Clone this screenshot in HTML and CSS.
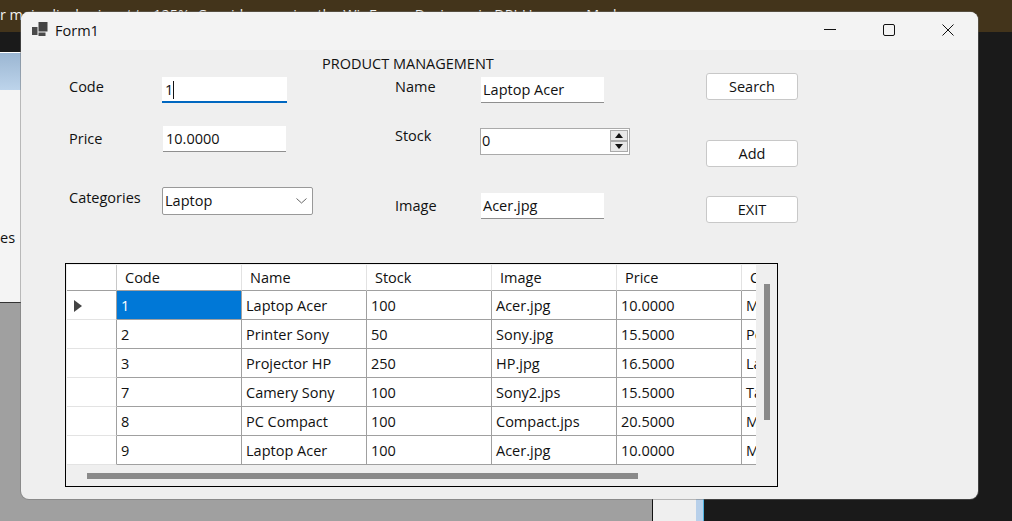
FILE: index.html
```html
<!DOCTYPE html>
<html lang="en">
<head>
<meta charset="utf-8">
<title>Form1</title>
<link rel="stylesheet" href="styles.css">
</head>
<body>
<div class="desktop">
  <div class="banner">r main display is set to 125%. Consider running the WinForms Designer in DPI-Unaware Mode</div>
  <div class="back-doc">
    <div class="back-gradient"></div>
    <div class="back-text">es</div>
  </div>
  <div class="back-gray"></div>
  <div class="back-strip"></div>

  <main class="window">
    <header class="titlebar">
      <svg class="app-icon" width="16" height="14" viewBox="0 0 16 14"><rect x="0" y="5" width="5.5" height="8" fill="#4a4a4a"/><rect x="6.5" y="0" width="9" height="9.5" fill="#444"/><rect x="6.5" y="10.5" width="7" height="3.5" fill="#4a4a4a"/></svg>
      <span class="title-text">Form1</span>
      <div class="caption-buttons">
        <svg width="12" height="12" viewBox="0 0 12 12"><path d="M0 5.5H12" stroke="#111" stroke-width="1"/></svg>
        <svg width="12" height="12" viewBox="0 0 12 12"><rect x=".5" y=".5" width="11" height="11" rx="1.5" fill="none" stroke="#111"/></svg>
        <svg width="12" height="12" viewBox="0 0 12 12"><path d="M.5 .5L11.5 11.5M11.5 .5L.5 11.5" stroke="#111" stroke-width="1"/></svg>
      </div>
    </header>

    <section class="form-panel">
      <h1 class="form-title">PRODUCT MANAGEMENT</h1>
      <div class="form-columns">
        <div class="col col-left">
          <div class="row row-code"><label class="lbl">Code</label><div class="field field-focus">1<span class="caret"></span></div></div>
          <div class="row row-price"><label class="lbl lbl-3">Price</label><div class="field field-narrow">10.0000</div></div>
          <div class="row row-cat"><label class="lbl lbl-1">Categories</label>
            <div class="combo"><span>Laptop</span><svg width="11" height="6" viewBox="0 0 11 6"><path d="M.5 .5L5.5 5L10.5 .5" fill="none" stroke="#666"/></svg></div>
          </div>
        </div>
        <div class="col col-mid">
          <div class="row row-name"><label class="lbl">Name</label><div class="field field-mid">Laptop Acer</div></div>
          <div class="row row-stock"><label class="lbl">Stock</label>
            <div class="numeric"><span>0</span>
              <div class="spin">
                <div class="spin-btn"><svg width="8" height="5" viewBox="0 0 8 5"><path d="M4 0L8 5H0Z" fill="#111"/></svg></div>
                <div class="spin-btn"><svg width="8" height="5" viewBox="0 0 8 5"><path d="M0 0H8L4 5Z" fill="#111"/></svg></div>
              </div>
            </div>
          </div>
          <div class="row row-image"><label class="lbl lbl-3">Image</label><div class="field field-mid">Acer.jpg</div></div>
        </div>
        <div class="col col-right">
          <button class="btn">Search</button>
          <button class="btn btn-add">Add</button>
          <button class="btn btn-exit">EXIT</button>
        </div>
      </div>

      <div class="grid-frame">
        <div class="grid-view">
          <div class="cell rh hd"></div><div class="cell hd">Code</div><div class="cell hd">Name</div><div class="cell hd">Stock</div><div class="cell hd">Image</div><div class="cell hd">Price</div><div class="cell hd">C</div>

          <div class="cell rh"><svg width="8" height="12" viewBox="0 0 8 12"><path d="M0 0L8 6L0 12Z" fill="#444"/></svg></div><div class="cell sel">1</div><div class="cell">Laptop Acer</div><div class="cell">100</div><div class="cell">Acer.jpg</div><div class="cell">10.0000</div><div class="cell">M</div>

          <div class="cell rh"></div><div class="cell">2</div><div class="cell">Printer Sony</div><div class="cell">50</div><div class="cell">Sony.jpg</div><div class="cell">15.5000</div><div class="cell">Pe</div>

          <div class="cell rh"></div><div class="cell">3</div><div class="cell">Projector HP</div><div class="cell">250</div><div class="cell">HP.jpg</div><div class="cell">16.5000</div><div class="cell">La</div>

          <div class="cell rh"></div><div class="cell">7</div><div class="cell">Camery Sony</div><div class="cell">100</div><div class="cell">Sony2.jps</div><div class="cell">15.5000</div><div class="cell">Ta</div>

          <div class="cell rh"></div><div class="cell">8</div><div class="cell">PC Compact</div><div class="cell">100</div><div class="cell">Compact.jps</div><div class="cell">20.5000</div><div class="cell">M</div>

          <div class="cell rh"></div><div class="cell">9</div><div class="cell">Laptop Acer</div><div class="cell">100</div><div class="cell">Acer.jpg</div><div class="cell">10.0000</div><div class="cell">M</div>
        </div>
        <div class="vscroll"><div class="vthumb"></div></div>
        <div class="hscroll"><div class="hthumb"></div></div>
      </div>
    </section>
  </main>
</div>
</body>
</html>
```
FILE: styles.css
```css
* { box-sizing: border-box; }
html, body { margin: 0; padding: 0; }
body { font-family: "Open Sans", "Noto Sans", sans-serif; font-size: 14.5px; color: #111; }

.desktop { position: relative; width: 1012px; height: 521px; overflow: hidden; background: #1a1a1a; }
.banner { height: 32px; background: #43341b; color: #f2f2f2; white-space: nowrap; padding-top: 5px; font-size: 14.4px; line-height: 20px; overflow: hidden; }

.back-doc { position: absolute; left: 0; top: 52px; width: 21px; height: 250px; background: #f4f4f4; border-top: 1px solid #fff; }
.back-gradient { height: 37px; background: linear-gradient(#9bb6d2, #bdd4eb); }
.back-text { margin-top: 139px; line-height: 18px; color: #111; }
.back-gray { position: absolute; left: 0; top: 302px; width: 652px; height: 219px; background: #a0a0a0; border-top: 1px solid #333; }
.back-strip { position: absolute; left: 652px; top: 302px; width: 52px; height: 219px; background: #efefef; border-left: 1px solid #111; border-right: 1px solid #4fb3e0; }
.back-strip::after { content: ""; position: absolute; right: 0; top: 0; bottom: 0; width: 7px; background: #b8d0ea; }

.window { position: absolute; left: 21px; top: 12px; width: 957px; height: 487px; background: #efefef; border-radius: 8px; overflow: hidden; box-shadow: 0 0 0 1px rgba(110,110,110,.45); }

.titlebar { height: 38px; background: #f3f3f3; display: flex; align-items: center; padding-left: 11px; }
.app-icon { margin-top: -4px; }
.title-text { margin-left: 7px; line-height: 20px; margin-top: -1px; }
.caption-buttons { margin-left: auto; display: flex; gap: 47px; padding-right: 24px; margin-top: -2px; }
.caption-buttons svg { display: block; }

.form-title { margin: 0; padding: 5px 0 0 301px; font-size: 14.5px; font-weight: 400; line-height: 18px; }

.form-columns { display: flex; padding-left: 48px; height: 150px; }
.col { display: flex; flex-direction: column; }
.col-left { width: 244px; padding-top: 4px; margin-right: 82px; }
.col-mid { width: 235px; padding-top: 4px; margin-right: 76px; }
.col-right { width: 92px; }

.row { display: flex; align-items: flex-start; }
.lbl { line-height: 20px; }
.lbl-1 { padding-top: 1px; }
.lbl-3 { padding-top: 3px; }
.col-left .lbl { width: 93px; }
.col-mid .lbl { width: 85px; }
.row-price { margin-top: 23px; }
.row-cat { margin-top: 35px; }
.row-stock { margin-top: 23px; }
.row-image { margin-top: 38px; }

.field { background: #fff; height: 26px; line-height: 26px; padding-left: 3px; border-bottom: 1px solid #8f8f8f; }
.field-focus { width: 125px; border-bottom: 2px solid #0067c0; line-height: 25px; }
.field-narrow { width: 123px; margin-left: 1px; }
.field-mid { width: 123px; margin-left: 1px; padding-left: 2px; line-height: 25px; }
.caret { display: inline-block; width: 1px; height: 18px; background: #111; vertical-align: -4px; }

.combo { width: 151px; height: 28px; background: #fff; border: 1px solid #999; border-radius: 2px; display: flex; align-items: center; justify-content: space-between; padding: 0 5px 2px 2px; }
.combo svg { margin-top: 2px; }

.numeric { width: 150px; height: 27px; background: #fff; border: 1px solid #aaa; margin-top: 2px; display: flex; align-items: flex-start; justify-content: space-between; padding: 1px; line-height: 22px; }
.spin { display: flex; flex-direction: column; }
.spin-btn { width: 18px; height: 11px; background: #e8e8e8; border: 1px solid #aaa; display: flex; align-items: center; justify-content: center; }

.btn { width: 92px; height: 27px; background: #fff; border: 1px solid #c8c8c8; border-radius: 3px; padding: 0; font: inherit; color: #111; }
.btn-add { margin-top: 40px; }
.btn-exit { margin-top: 29px; }

.grid-frame { margin: 40px 0 0 44px; width: 713px; height: 224px; border: 1px solid #000; padding: 1px; background: #efefef; display: grid; grid-template-columns: 689px 21px; grid-template-rows: 200px 21px; }
.grid-view { overflow: hidden; display: grid; grid-template-columns: 50px repeat(6, 125px); grid-template-rows: 26px repeat(6, 29px); width: 689px; height: 200px; background: #fff; }

.cell { background: #fff; border-right: 1px solid #a0a0a0; border-bottom: 1px solid #a0a0a0; display: flex; align-items: center; padding-left: 4px; white-space: nowrap; overflow: hidden; padding-top: 1px; }
.hd { border-right-color: #e2e2e2; padding-left: 8px; padding-top: 0; padding-bottom: 1px; }
.rh { border-right-color: #a0a0a0; border-bottom-color: #e3e3e3; padding-left: 7px; }
.hd.rh { border-bottom-color: #a0a0a0; border-right-color: #c8c8c8; }
.sel { background: #0078d7; color: #fff; }

.vscroll { padding: 19px 0 0 8px; }
.vthumb { width: 6px; height: 136px; background: #8a8a8a; }
.hscroll { padding: 8px 0 0 20px; grid-column: 1 / 3; }
.hthumb { width: 551px; height: 6px; background: #8a8a8a; }
```
